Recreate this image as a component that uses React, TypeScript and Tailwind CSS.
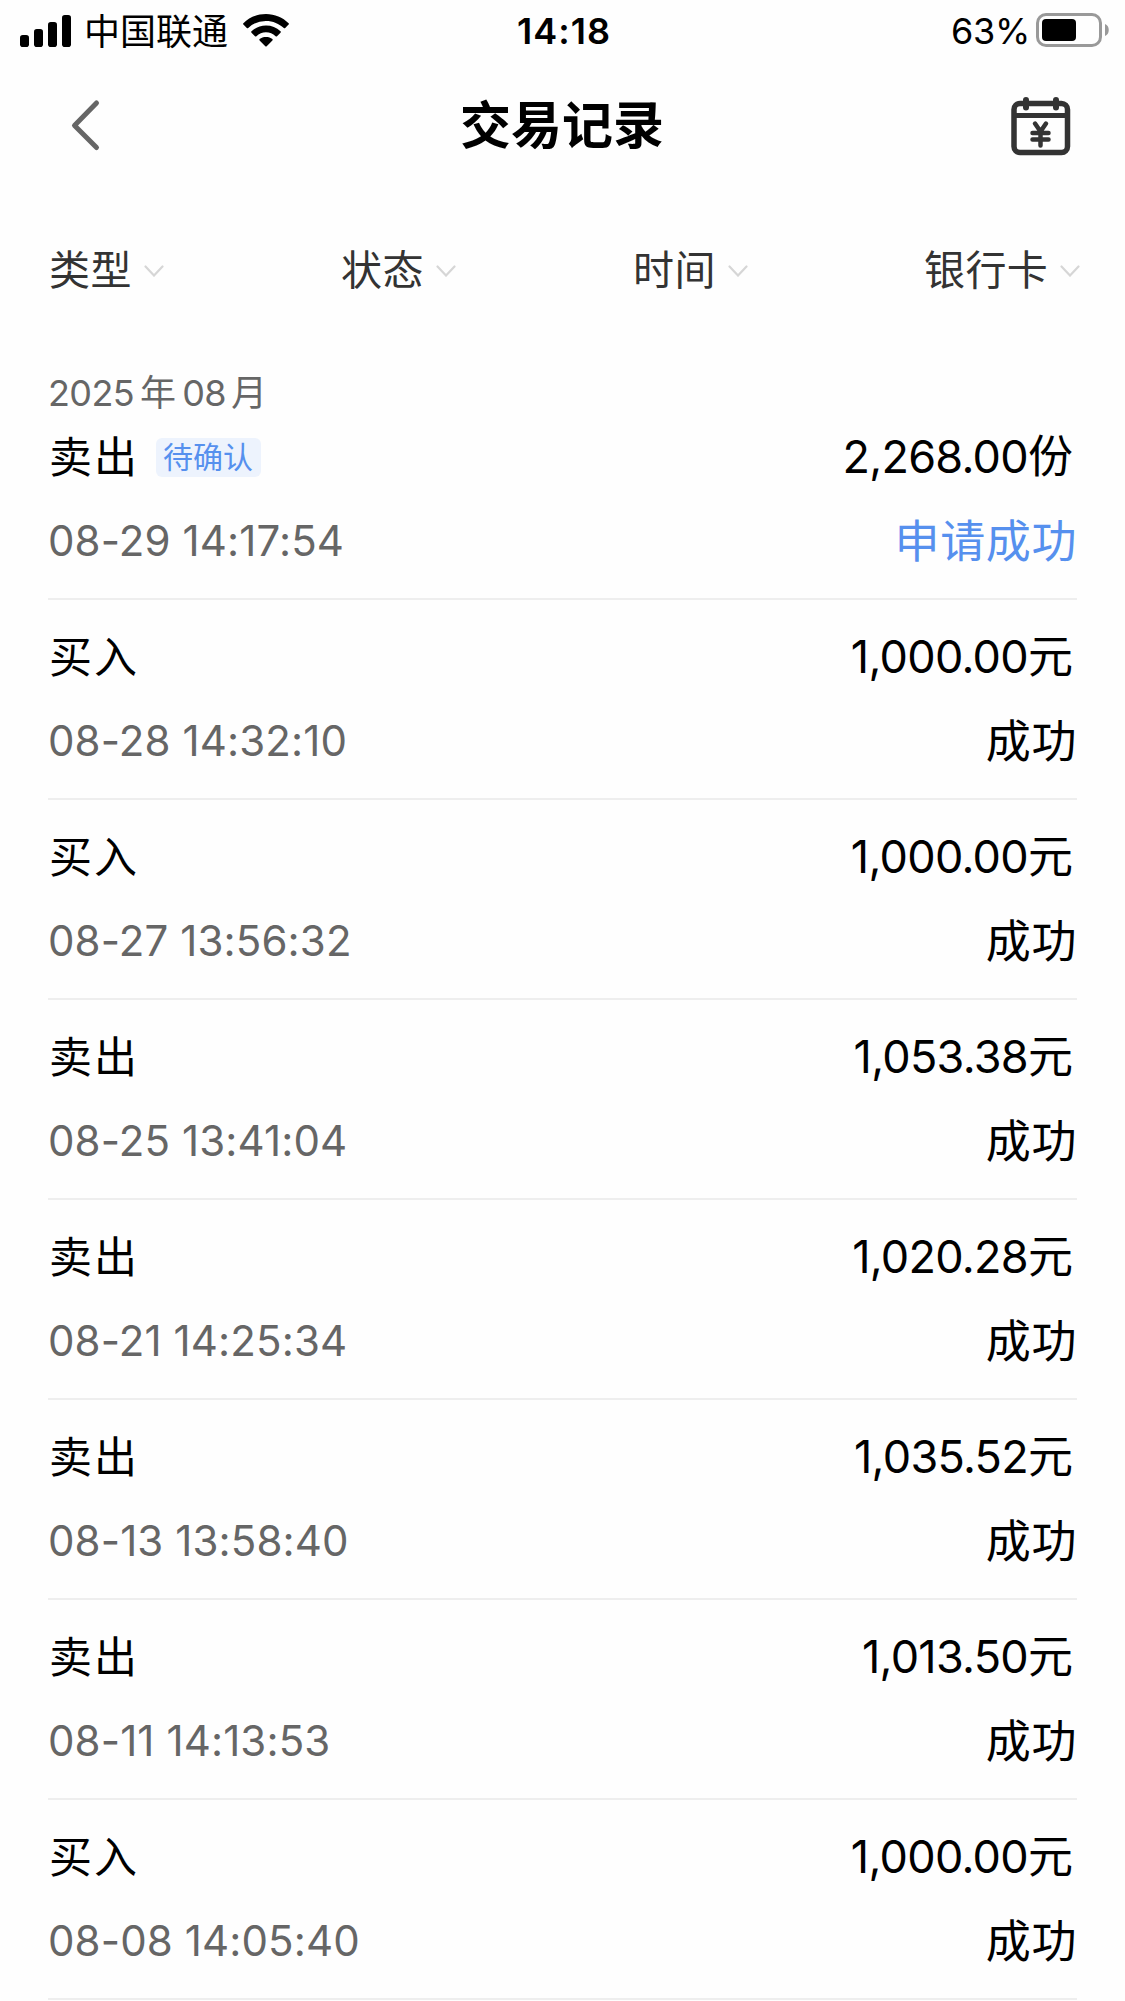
import React from 'react';

interface TradeRecord {
  type: string;
  tag?: string;
  time: string;
  amount: string;
  unit: string;
  status: string;
  pending?: boolean;
}

const FILTERS = [
  { label: '类型', width: 'w-[292px]' },
  { label: '状态', width: 'w-[292px]' },
  { label: '时间', width: 'w-[291px]' },
  { label: '银行卡', width: 'w-[165px]' },
];

const RECORDS: TradeRecord[] = [
  { type: '卖出', tag: '待确认', time: '08-29 14:17:54', amount: '2,268.00', unit: '份', status: '申请成功', pending: true },
  { type: '买入', time: '08-28 14:32:10', amount: '1,000.00', unit: '元', status: '成功' },
  { type: '买入', time: '08-27 13:56:32', amount: '1,000.00', unit: '元', status: '成功' },
  { type: '卖出', time: '08-25 13:41:04', amount: '1,053.38', unit: '元', status: '成功' },
  { type: '卖出', time: '08-21 14:25:34', amount: '1,020.28', unit: '元', status: '成功' },
  { type: '卖出', time: '08-13 13:58:40', amount: '1,035.52', unit: '元', status: '成功' },
  { type: '卖出', time: '08-11 14:13:53', amount: '1,013.50', unit: '元', status: '成功' },
  { type: '买入', time: '08-08 14:05:40', amount: '1,000.00', unit: '元', status: '成功' },
];

function StatusBar() {
  return (
    <div className="grid h-[62px] grid-cols-3 items-center pl-5 pr-[15px] text-black">
      <div className="flex items-center">
        <svg width="52" height="34" viewBox="0 0 52 34" className="shrink-0">
          <rect x="0" y="21" width="9" height="12" rx="2.8" />
          <rect x="14" y="15" width="9" height="18" rx="2.8" />
          <rect x="28" y="8" width="9" height="25" rx="2.8" />
          <rect x="42" y="1" width="9" height="32" rx="2.8" />
        </svg>
        <span className="ml-[12px] whitespace-nowrap pt-[2px] text-[36px] leading-[60px]">中国联通</span>
        <svg width="46" height="34" viewBox="0 0 46 34" className="ml-[15px] shrink-0">
          <path d="M23 0C14.2 0 6.2 3.5.4 9.2a1 1 0 0 0 0 1.400l3.400 3.400a1 1 0 0 0 1.400 0A25.500 25.500 0 0 1 23 6.900c6.900 0 13.200 2.700 17.800 7.100a1 1 0 0 0 1.400 0l3.400-3.400a1 1 0 0 0 0-1.400C39.800 3.500 31.800 0 23 0Z" />
          <path d="M23 11.500c-5.600 0-10.700 2.200-14.500 5.800a1 1 0 0 0 0 1.400l3.500 3.500a1 1 0 0 0 1.400 0 13.900 13.900 0 0 1 19.200 0 1 1 0 0 0 1.400 0l3.500-3.500a1 1 0 0 0 0-1.400A21 21 0 0 0 23 11.500Z" />
          <path d="M23 22.700c-2.500 0-4.700.9-6.400 2.400a1 1 0 0 0 0 1.400l5.700 5.700a1 1 0 0 0 1.400 0l5.700-5.700a1 1 0 0 0 0-1.400c-1.700-1.500-3.900-2.400-6.400-2.400Z" />
        </svg>
      </div>
      <div className="pr-[2px] text-center text-[36px] font-semibold leading-[60px] tracking-[1px]">14:18</div>
      <div className="flex items-center justify-end">
        <span className="text-[36px] leading-[60px] tracking-[-0.3px]">63%</span>
        <svg width="74" height="36" viewBox="0 0 74 36" className="ml-[6px] shrink-0">
          <rect x="1.500" y="1.500" width="63" height="31" rx="8.500" fill="none" stroke="#999" strokeWidth="3" />
          <rect x="6" y="6" width="34" height="22" rx="4" />
          <path d="M69 11c5 1.500 5 10.500 0 12Z" fill="#999" />
        </svg>
      </div>
    </div>
  );
}

function NavBar() {
  return (
    <div className="flex h-[128px] items-center justify-between pl-[70px] pr-[54px]">
      <svg width="60" height="54" viewBox="0 0 60 54" fill="none" stroke="#666" strokeWidth="5" strokeLinecap="round" strokeLinejoin="round">
        <path d="M26.500 4 4.500 26.500l22 22" />
      </svg>
      <h1 className="text-[51px] font-bold leading-[72px] text-black">交易记录</h1>
      <svg width="60" height="60" viewBox="0 0 60 60" fill="none" stroke="#333" strokeWidth="5.500" strokeLinecap="round" strokeLinejoin="round" className="ml-[17px]">
        <rect x="3" y="7.500" width="53.500" height="49" rx="6" />
        <path d="M3 19.500h53.500" strokeWidth="5" strokeLinecap="butt" />
        <path d="M15 4v7.500M45 4v7.500" strokeWidth="6" />
        <path d="m24 27.500 5.500 8 5.500-8M21.500 37h16M21.500 43.500h16M29.500 36.500v13" strokeWidth="4.500" />
      </svg>
    </div>
  );
}

function FilterBar() {
  return (
    <div className="flex h-[160px] items-center pl-[49px] text-[#333]">
      {FILTERS.map((filter) => (
        <div key={filter.label} className={`flex shrink-0 items-center ${filter.width}`}>
          <span className="whitespace-nowrap text-[41px] leading-[60px] tracking-[0.400px]">{filter.label}</span>
          <svg width="20" height="12" viewBox="0 0 20 12" fill="none" stroke="#d6d6d6" strokeWidth="2.200" strokeLinecap="round" className="ml-[12px] mt-[2px] shrink-0">
            <path d="m1.500 1.500 8.500 9 8.500-9" />
          </svg>
        </div>
      ))}
    </div>
  );
}

function RecordRow({ record }: { record: TradeRecord }) {
  return (
    <li className="flex h-[200px] flex-col border-b-2 border-[#eee] pt-[25px]">
      <div className="flex h-[64px] items-center justify-between text-black">
        <div className="flex items-center">
          <span className="pl-px text-[43px] leading-[64px] tracking-[2px]">{record.type}</span>
          {record.tag && (
            <span className="ml-[17px] flex h-[39px] w-[105px] items-center justify-center rounded-md bg-[#edf3fd] pr-px text-[30px] text-[#5690ee]">
              {record.tag}
            </span>
          )}
        </div>
        <div className="flex items-center pr-[4px] text-[45px] leading-[64px]">
          <span className="-mt-px tracking-[-0.700px]">{record.amount}</span>
          <span>{record.unit}</span>
        </div>
      </div>
      <div className="mt-[21px] flex h-[64px] items-center justify-between">
        <span className="-mt-[2px] text-[42px] leading-[64px] tracking-[0.120px] text-[#666]">{record.time}</span>
        <span className={`text-[45px] leading-[64px] tracking-[0.600px] ${record.pending ? 'text-[#5690ee]' : 'text-black'}`}>{record.status}</span>
      </div>
    </li>
  );
}

export default function App() {
  return (
    <div className="h-[2001px] w-[1125px] overflow-hidden bg-[#fefefe] font-['Inter','Noto_Sans_CJK_SC',sans-serif]">
      <StatusBar />
      <NavBar />
      <FilterBar />
      <main className="px-12">
        <div className="flex h-[50px] items-end text-[36px] leading-[14px] text-[#666]">
          <span className="tracking-[-0.600px]">2025</span>
          <span className="ml-[6px]">年</span>
          <span className="ml-[6px] tracking-[-0.600px]">08</span>
          <span className="ml-[5px]">月</span>
        </div>
        <ul>
          {RECORDS.map((record) => (
            <RecordRow key={record.time} record={record} />
          ))}
        </ul>
      </main>
    </div>
  );
}
